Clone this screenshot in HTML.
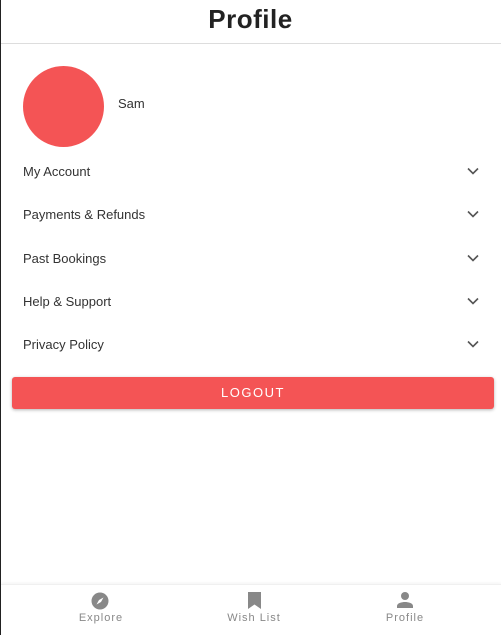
<!DOCTYPE html>
<html><head><style>
body{margin:0;width:501px;height:635px;background:#fff;font-family:"Liberation Sans",sans-serif;position:relative;overflow:hidden;color:#222}
.lb{position:absolute;left:0;top:0;width:1px;height:635px;background:#222}
h1{position:absolute;top:4px;left:0;width:501px;text-align:center;margin:0;font-size:26px;font-weight:bold;color:#222;letter-spacing:.5px}
.hr{position:absolute;top:43px;left:1px;right:0;height:1px;background:#ddd}
.av{position:absolute;left:23px;top:66px;width:81px;height:81px;border-radius:50%;background:#f45455}
.sam{position:absolute;left:118px;top:96px;font-size:13px;color:#333}
.it{position:absolute;left:23px;font-size:13px;color:#333}
.ch{position:absolute;left:467px;width:12px;height:8px}
.btn{position:absolute;left:12px;top:377px;width:482px;height:32px;background:#f45455;border-radius:3px;box-shadow:0 1px 3px rgba(0,0,0,.3);color:#fff;font-size:13px;letter-spacing:1.5px;text-align:center;line-height:32px}
.nav{position:absolute;left:1px;right:0;top:584px;height:51px;border-top:1px solid #f0f0f0;box-shadow:0 -1px 3px rgba(0,0,0,.05)}
.lab{position:absolute;top:27px;font-size:11px;color:#888;letter-spacing:1px;width:100px;text-align:center}
.ic{position:absolute;top:7px}
</style></head><body>
<div class="lb"></div>
<h1>Profile</h1>
<div class="hr"></div>
<div class="av"></div>
<div class="sam">Sam</div>
<div class="it" style="top:164px">My Account</div>
<div class="it" style="top:207px">Payments &amp; Refunds</div>
<div class="it" style="top:251px">Past Bookings</div>
<div class="it" style="top:294px">Help &amp; Support</div>
<div class="it" style="top:337px">Privacy Policy</div>
<svg class="ch" style="top:167px" viewBox="0 0 12 8"><path d="M1 1.5l5 5 5-5" fill="none" stroke="#555" stroke-width="1.6"/></svg>
<svg class="ch" style="top:210px" viewBox="0 0 12 8"><path d="M1 1.5l5 5 5-5" fill="none" stroke="#555" stroke-width="1.6"/></svg>
<svg class="ch" style="top:254px" viewBox="0 0 12 8"><path d="M1 1.5l5 5 5-5" fill="none" stroke="#555" stroke-width="1.6"/></svg>
<svg class="ch" style="top:297px" viewBox="0 0 12 8"><path d="M1 1.5l5 5 5-5" fill="none" stroke="#555" stroke-width="1.6"/></svg>
<svg class="ch" style="top:340px" viewBox="0 0 12 8"><path d="M1 1.5l5 5 5-5" fill="none" stroke="#555" stroke-width="1.6"/></svg>
<div class="btn">LOGOUT</div>
<div class="nav">
<svg class="ic" style="left:90px" width="18" height="18" viewBox="0 0 18 18"><circle cx="9" cy="9" r="8.5" fill="#888"/><path d="M12.5 5.5L10 10 5.5 12.5 8 8z" fill="#fff"/></svg>
<div class="lab" style="left:50px">Explore</div>
<svg class="ic" style="left:247px" width="13" height="17" viewBox="0 0 13 17"><path d="M0 0h13v17l-6.5-4.5L0 17z" fill="#888"/></svg>
<div class="lab" style="left:203px">Wish List</div>
<svg class="ic" style="left:396px" width="16" height="16" viewBox="0 0 16 16"><circle cx="8" cy="4" r="4" fill="#888"/><path d="M0 16v-2c0-3 5-4 8-4s8 1 8 4v2z" fill="#888"/></svg>
<div class="lab" style="left:354px">Profile</div>
</div>
</body></html>
